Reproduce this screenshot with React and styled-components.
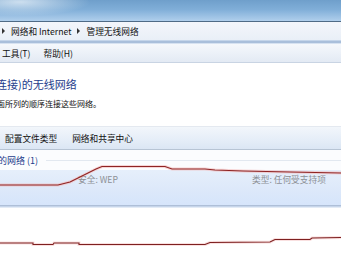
import React from "react";
import styled, { createGlobalStyle } from "styled-components";

const GlobalStyle = createGlobalStyle`
  html, body {
    margin: 0;
    padding: 0;
    background: #ffffff;
  }
  body {
    font-family: "Noto Sans CJK SC", "Liberation Sans", sans-serif;
    font-size: 9px;
    color: #111;
  }
`;

const Window = styled.div`
  position: relative;
  width: 341px;
  height: 256px;
  overflow: hidden;
  background: #fff;
  display: flex;
  flex-direction: column;
`;

const TitleBar = styled.div`
  height: 21px;
  background:
    radial-gradient(ellipse 70px 14px at 20px 2px, rgba(235, 243, 250, 0.75), rgba(235, 243, 250, 0) 100%),
    linear-gradient(180deg, #6f9fcb 0%, #80aed8 45%, #b0cfec 100%);
  border-bottom: 1px solid #4f6b86;
`;

const AddressBar = styled.div`
  height: 18px;
  display: flex;
  align-items: center;
  gap: 5px;
  padding-left: 1px;
  background: linear-gradient(180deg, #f3f6fb 0%, #e9eff7 100%);
  font-size: 8.7px;
  color: #111;
`;

const Crumb = styled.span`
  white-space: nowrap;
`;

const Arrow = styled.span`
  display: inline-block;
  width: 0;
  height: 0;
  border-top: 3px solid transparent;
  border-bottom: 3px solid transparent;
  border-left: 3px solid #333;
  margin: 0 1px;
`;

const Rule = styled.div`
  height: ${(p) => p.h || 1}px;
  background: ${(p) => p.c};
`;

const MenuBar = styled.div`
  height: 18px;
  display: flex;
  align-items: center;
  gap: 13px;
  padding-left: 2px;
  background: linear-gradient(180deg, #f5f8fc 0%, #e3eaf4 100%);
  border-bottom: 1px solid #c9d4e3;
  font-size: 8.7px;
`;

const Content = styled.div`
  padding: 14px 0 0 0;
  height: 63px;
  box-sizing: border-box;
`;

const Heading = styled.div`
  font-size: 11px;
  line-height: 14px;
  color: #1e3c8c;
  margin-left: -4px;
  white-space: nowrap;
`;

const Sub = styled.div`
  margin-top: 7px;
  margin-left: -3px;
  font-size: 8px;
  line-height: 12px;
  color: #111;
  white-space: nowrap;
`;

const Toolbar = styled.div`
  height: 22px;
  display: flex;
  align-items: center;
  gap: 15px;
  padding-left: 5px;
  background: linear-gradient(180deg, #f2f6fb 0%, #e6eef8 55%, #dbe6f4 100%);
  border-top: 1px solid #e4e9f0;
  border-bottom: 1px solid #b7c4d4;
  font-size: 8.7px;
  color: #111;
`;

const GroupHeader = styled.div`
  height: 20px;
  display: flex;
  align-items: center;
  gap: 8px;
  margin-left: -2px;
  font-size: 9px;
  color: #1e3c8c;
  background: #fbfcfe;
  white-space: nowrap;
`;

const HeaderLine = styled.div`
  flex: 1;
  height: 1px;
  background: #e2e8f0;
`;

const Item = styled.div`
  height: 36px;
  display: flex;
  align-items: flex-start;
  padding: 4px 0 0 78px;
  box-sizing: border-box;
  background: linear-gradient(180deg, #e6effb 0%, #dce8fa 60%, #d6e5fb 100%);
  border-bottom: 1px solid #aebfd8;
  box-shadow: 0 1px 0 #c6d5ea, 0 2px 0 #e3ebf6;
  font-size: 8.7px;
  line-height: 12px;
  color: #8d9095;
`;

const Field = styled.span`
  flex: 0 0 ${(p) => p.w || "auto"};
  white-space: nowrap;
`;

const Ink = styled.svg`
  position: absolute;
  left: 0;
  top: 0;
  pointer-events: none;
`;

const upper =
  "M0,185 L58,185 L70,182 L78,178 L88,173 L96,169 L102,166.5 L165,166.5 L172,169 L205,169 L215,170 L243,171 L290,172 L341,173";
const lower =
  "M0,243 L33,243 L33,244.5 L53,244.5 L54,243 L79,243 L79,244.5 L205,244.5 L210,242.5 L270,242 L275,239.5 L310,239.5 L312,238 L341,237.5";

const App = () => {
  return (
    <Window>
      <GlobalStyle />
      <TitleBar />
      <AddressBar>
        <Arrow />
        <Crumb>网络和 Internet</Crumb>
        <Arrow />
        <Crumb>管理无线网络</Crumb>
      </AddressBar>
      <Rule c="#c4d5ea" />
      <Rule c="#a9bfdb" h={2} />
      <Rule c="#d6e2f1" />
      <MenuBar>
        <span>工具(T)</span>
        <span>帮助(H)</span>
      </MenuBar>
      <Content>
        <Heading>连接)的无线网络</Heading>
        <Sub>面所列的顺序连接这些网络。</Sub>
      </Content>
      <Toolbar>
        <span>配置文件类型</span>
        <span>网络和共享中心</span>
      </Toolbar>
      <GroupHeader>
        <span>的网络 (1)</span>
        <HeaderLine />
      </GroupHeader>
      <Item>
        <Field w="174px">安全: WEP</Field>
        <Field>类型: 任何受支持项</Field>
      </Item>
      <Ink width="341" height="256" viewBox="0 0 341 256">
        <path d={upper} fill="none" stroke="#f3b9b9" strokeWidth="3" opacity="0.6" />
        <path d={upper} fill="none" stroke="#8e2323" strokeWidth="1.1" />
        <path d={lower} fill="none" stroke="#f3c2c2" strokeWidth="3" opacity="0.5" />
        <path d={lower} fill="none" stroke="#7e2020" strokeWidth="1.1" />
      </Ink>
    </Window>
  );
};

export default App;
